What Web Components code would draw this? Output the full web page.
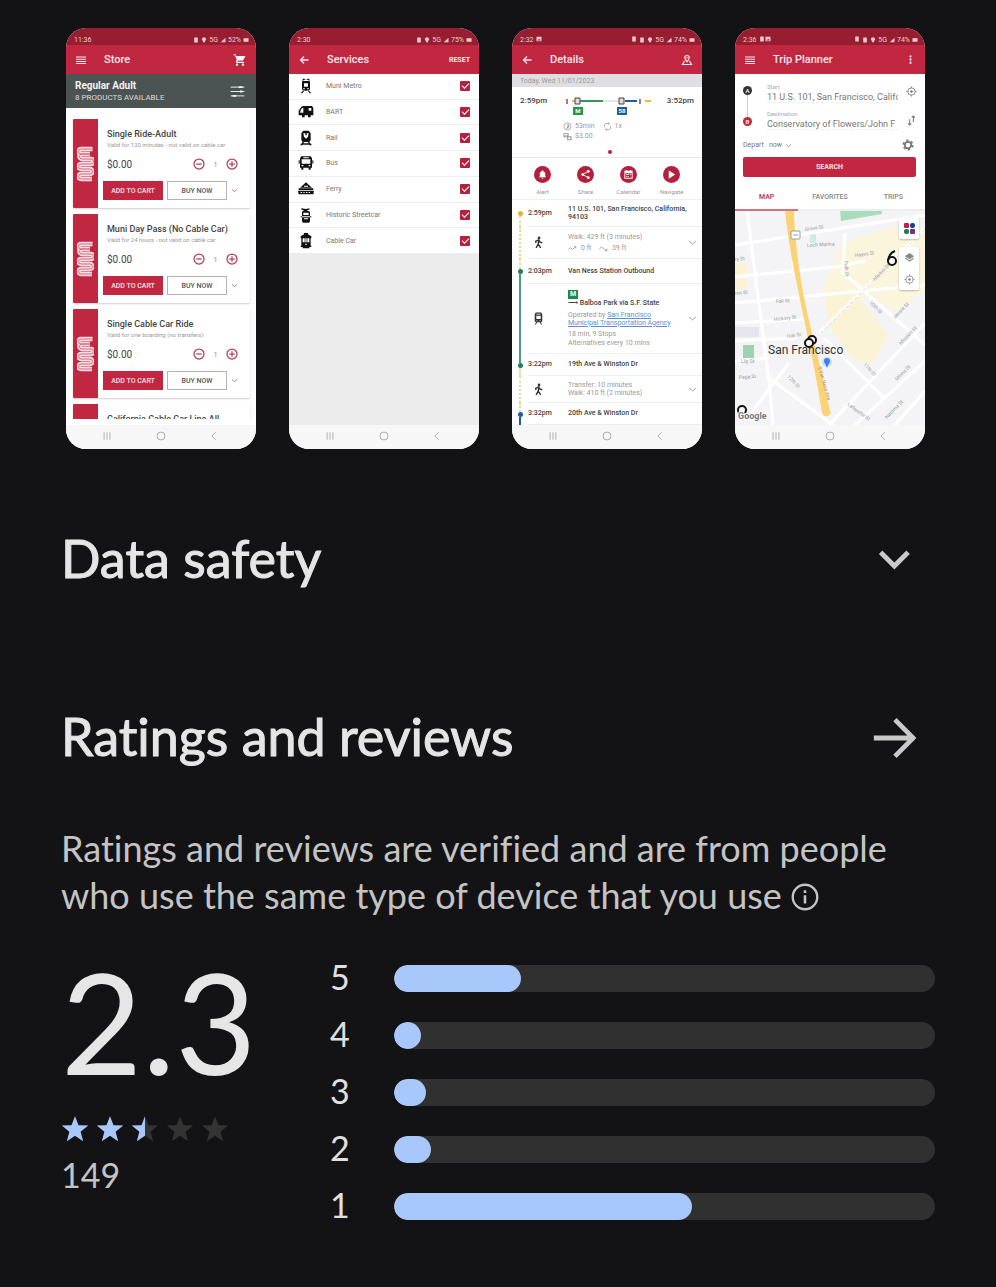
<!DOCTYPE html>
<html lang="en">
<head>
<meta charset="utf-8">
<meta name="viewport" content="width=device-width, initial-scale=1">
<title>App listing</title>
<style>
  body { margin: 0; background: #131315; color: #e3e3e3; font-family: Lato, "Open Sans", sans-serif; font-variant-ligatures: none; }
</style>
</head>
<body>
<app-listing></app-listing>
<script>
const define = (name, html, setup) => {
  const t = document.createElement('template');
  t.innerHTML = html;
  customElements.define(name, class extends HTMLElement {
    connectedCallback() {
      if (this.shadowRoot) return;
      const root = this.attachShadow({ mode: 'open' });
      root.append(t.content.cloneNode(true));
      if (setup) setup(this, root);
    }
  });
};

/* ---------- icons ---------- */
const line = (d, w = 2) => `<path d="${d}" fill="none" stroke="currentColor" stroke-width="${w}"/>`;
const fill = d => `<path d="${d}" fill="currentColor" fill-rule="evenodd"/>`;
const ICONS = {
  chevron: line('M4.700 7.800l7.500 7.500 7.500-7.500', 2.6),
  thin: line('M3 8l9 8 9-8', 2.5),
  arrow: line('M1 12h20.500M12.500 2l10 10-10 10', 2.6),
  back: line('M21 12H5M12 5l-7 7 7 7', 2.6),
  info: '<circle cx="12" cy="12" r="10.500" fill="none" stroke="currentColor" stroke-width="2"/>' + fill('M10.900 10.500h2.200v7h-2.200zM10.900 6.300h2.200v2.300h-2.200z'),
  menu: line('M2 6h20M2 10.500h20M2 15h20M2 19h20', 2.4),
  cart: fill('M7 18a2 2 0 100 4 2 2 0 000-4zM17 18a2 2 0 100 4 2 2 0 000-4zM1 2v2h2l3.600 7.600L5.200 14C4.500 15.400 5.500 17 7 17h12v-2H7.400l1.100-2h7.500c.7 0 1.400-.4 1.700-1L21.500 5H5.200L4.300 2z'),
  tune: line('M1 5h22M1 12h22M1 19h22', 1.5) + line('M14 5h6M16 12h4M4 19h6', 3),
  dots: fill('M10 3h4v4h-4zM10 10h4v4h-4zM10 17h4v4h-4z'),
  place: line('M12 3a4.500 4.500 0 014.500 4.500c0 3-4.500 8-4.500 8s-4.500-5-4.500-8A4.500 4.500 0 0112 3zM7 14l-4 7h18l-4-7', 2.4) + fill('M11 6h2v3h-2z'),
  minus: '<circle cx="12" cy="12" r="10" fill="none" stroke="currentColor" stroke-width="2.500"/>' + line('M6.500 12h11', 2.5),
  plus: '<circle cx="12" cy="12" r="10" fill="none" stroke="currentColor" stroke-width="2.500"/>' + line('M6.500 12h11M12 6.500v11', 2.5),
  star: fill('M12 1l3 7.700 8.300.4-6.500 5.200 2.200 8.100-7-4.600-7 4.600 2.200-8.100L.7 9.100 9 8.700z'),
  locate: '<circle cx="12" cy="12" r="8" fill="none" stroke="currentColor" stroke-width="1.800"/><circle cx="12" cy="12" r="2.800" fill="currentColor"/>' + line('M12 1v4M12 19v4M1 12h4M19 12h4', 1.8),
  swap: line('M8 9v13M4.500 18.500L8 22l3.500-3.500M16 15V2M12.500 5.500L16 2l3.500 3.500', 2.2),
  gear: '<circle cx="12" cy="12" r="6.500" fill="none" stroke="currentColor" stroke-width="3.500"/><circle cx="12" cy="12" r="9.500" fill="none" stroke="currentColor" stroke-width="3" stroke-dasharray="5 4.950"/>',
  walk: '<circle cx="13" cy="3.500" r="2.500" fill="currentColor"/>' + line('M12.500 7l-1 8 4.500 7M11.500 15l-4 7M7 13V9.500L12.500 7l2.500 4.500 4 1', 2.6),
  train: fill('M7 1h10l2 3v13l-2 2H7l-2-2V4zM8 7v6h8V7zM8 3h8v1.500H8zM8 15.500h2V17H8zM14 15.500h2V17h-2zM5 23l3-4h2l-3 4zM19 23l-3-4h-2l3 4z'),
  metro: fill('M7 1h3v1.500h4V1h3v3l1 2v11l-2 2H8l-2-2V6l1-2zM9 8v5h6V8zM8 3h8v1.500H8zM8 15h2v2H8zM14 15h2v2h-2zM4 23l4-4.500h2L6.500 23zM20 23l-4-4.500h-2l3.500 4.500z'),
  bart: fill('M8 3h13l2 3v11h-4v3h-4v-3H10v3H6v-3H1V10l4-6zM6 6l-2.500 4.500V13H8V6zM16 6v4h4V6z'),
  rail: fill('M8 1h8l3 4v10l-2 3H7l-2-3V5zM8 5l1 5 3 3 3-3 1-5h-3v3h-2V5zM3 23l4-5h2l-1 2h8l-1-2h2l4 5h-3l-1-1H7l-1 1z'),
  bus: fill('M5 2h14l2 3v14h-2v3h-3v-3H8v3H5v-3H3V5zM5.500 6.500v6.500h13V6.500zM8 3.500v1.500h8V3.500zM5.500 15v2H8v-2zM16 15v2h2.500v-2zM1 8h1.500v5H1zM21.500 8H23v5h-1.500z'),
  ferry: fill('M12 2l9 8H3zM1 11h22v3H1zM0 15h24l-1 5H1zM4 16.500v1.500h2v-1.500zM8 16.500v1.500h2v-1.500zM12 16.500v1.500h2v-1.500zM16 16.500v1.500h2v-1.500zM9 7v1.500h6V7z'),
  tram: fill('M5 2l7 1 5-1v2l-4 1 5 2v15H6V7l3-2-4-1zM8 8.500V12h8V8.500zM4 14h16v1.500H4zM9 17v1.500h6V17zM7 22h10v1.500H7z'),
  cable: fill('M9 0h6v2l5 3v3h-1v11h1v2h-3v2H7v-2H4v-2h1V8H4V5l5-3zM7 8v6h3V8zM11 8v6h2V8zM14 8v6h3V8zM11 16v2h2v-2z'),
  bell: fill('M12 21a2 2 0 002-2h-4a2 2 0 002 2zM18 16v-5c0-3-1.600-5.500-4.500-6.200V4a1.500 1.500 0 00-3 0v.800C7.600 5.500 6 8 6 11v5l-2 2h16z'),
  share: line('M18 5L6 12l12 7', 2) + '<circle cx="18" cy="5" r="3" fill="currentColor"/><circle cx="6" cy="12" r="3" fill="currentColor"/><circle cx="18" cy="19" r="3" fill="currentColor"/>',
  calendar: fill('M3 4h3V2h3v2h6V2h3v2h3v17H3zM5 9v10h14V9zM7 11h3v2H7zM11 11h2v2h-2zM15 11h2v2h-2zM7 15h3v2H7zM11 15h2v2h-2z'),
  play: fill('M6 3l14 9-14 9z'),
  clock: '<circle cx="12" cy="12" r="9.500" fill="none" stroke="currentColor" stroke-width="2"/>' + fill('M12 5v7l-4 5h6l3-9z'),
  loop: line('M4 14V9a5 5 0 015-5h8M14 1l3 3-3 3M20 10v5a5 5 0 01-5 5H7M10 23l-3-3 3-3', 2),
  fare: fill('M1 3h14v8h8v11H11v-8H1zM3 5v2h10V5zM3 9v2h8V9zM14 14v5h6v-5z'),
  up: line('M1 15l6-5 5 4 9-7M21 12V7h-5', 2.2),
  down: line('M1 13l6-5 5 5 9 5M21 12v6h-5', 2.2),
  layers: fill('M12 2l10 7-10 7L2 9zM2 14l10 7 10-7-2-1.500-8 5.500-8-5.500z'),
  recents: line('M5 3v18M12 3v18M19 3v18', 1.8),
  home: '<rect x="3" y="3" width="18" height="18" rx="7" fill="none" stroke="currentColor" stroke-width="1.900"/>',
  prev: line('M16 3l-9 9 9 9', 1.9),
  photo: fill('M2 3h20v18H2zM5 18h14l-5-7-3 4-2-2z'),
  signal: fill('M22 3v18H3z'),
  battery: fill('M2 5h20v14H2z'),
  blob: fill('M5 2h14v20H5z'),
  pin: fill('M12 1a8 8 0 018 8c0 5-8 14-8 14S4 14 4 9a8 8 0 018-8z')
};
customElements.define('ui-icon', class extends HTMLElement {
  connectedCallback() {
    if (this.shadowRoot) return;
    this.attachShadow({ mode: 'open' }).innerHTML = `
      <style>
        :host { display: inline-block; flex: none; width: 12px; height: 12px; }
        svg { display: block; width: 100%; height: 100%; }
      </style>
      <svg viewBox="0 0 24 24" aria-hidden="true">${ICONS[this.getAttribute('name')]}</svg>`;
  }
});

const RESET = `
  * { box-sizing: border-box; }
  button { font: inherit; color: inherit; background: none; border: 0; padding: 0; margin: 0; cursor: pointer; display: inline-flex; align-items: center; justify-content: center; }
  p, h2, h3, ul { margin: 0; padding: 0; }
`;

/* ---------- phone frame ---------- */
define('phone-shot', `
<style>${RESET}
  :host { display: flex; flex-direction: column; min-width: 0; min-height: 421px; border-radius: 20px; overflow: hidden; background: var(--body, #fff); color: #444; font-family: Roboto, sans-serif; font-size: 7px; }
  .status { display: flex; align-items: center; gap: 2px; height: 17px; padding: 6px 7px 0 8px; background: #971d30; color: #f4cbd1; line-height: 8px; }
  .status .sp { flex: 1; }
  .status ui-icon { width: 6px; height: 6px; }
  .bar { display: flex; align-items: center; height: 29px; padding: 0 9px; background: #c22742; color: #fbe9ec; }
  .lead { width: 29px; display: flex; }
  .lead ui-icon { width: 12px; height: 12px; }
  h3 { flex: 1; font-size: 11px; line-height: 14px; font-weight: 500; }
  main { flex: 1; display: flex; flex-direction: column; min-height: 0; }
  nav { display: flex; justify-content: space-between; align-items: center; height: 24px; padding: 0 37px 2px 36px; background: #f7f7f8; color: #999; }
  nav ui-icon { width: 10px; height: 10px; }
</style>
<div class="status"><span class="time"></span><span class="left"></span><span class="sp"></span><span class="right"></span><ui-icon name="blob"></ui-icon><ui-icon name="pin"></ui-icon><span>5G</span><ui-icon name="signal"></ui-icon><span class="charge"></span><ui-icon name="battery"></ui-icon></div>
<div class="bar"><button class="lead"></button><h3></h3><slot name="action"></slot></div>
<main><slot></slot></main>
<nav><button aria-label="Recents"><ui-icon name="recents"></ui-icon></button><button aria-label="Home"><ui-icon name="home"></ui-icon></button><button aria-label="Back"><ui-icon name="prev"></ui-icon></button></nav>
`, (el, r) => {
  const icons = list => (list || '').split(' ').filter(Boolean).map(n => `<ui-icon name="${n}"></ui-icon>`).join('');
  r.querySelector('.time').textContent = el.getAttribute('time');
  r.querySelector('.charge').textContent = el.getAttribute('charge');
  r.querySelector('.left').innerHTML = icons(el.getAttribute('notices'));
  r.querySelector('.right').innerHTML = icons(el.getAttribute('extras'));
  r.querySelector('h3').textContent = el.getAttribute('heading');
  const lead = r.querySelector('.lead');
  lead.innerHTML = icons(el.getAttribute('lead'));
  lead.setAttribute('aria-label', el.getAttribute('lead'));
  lead.style.justifyContent = 'flex-start';
});

/* ---------- store ---------- */
define('product-card', `
<style>${RESET}
  :host { display: grid; grid-template-columns: 25px 1fr; flex: none; height: 89px; background: #fff; box-shadow: 0 1px 2px rgba(0,0,0,.2); border-radius: 1px; color: #444; }
  :host([peek]) .price, :host([peek]) .buy, :host([peek]) svg, :host([peek]) p { display: none; }
  .brand { background: #c22742; display: flex; align-items: center; justify-content: center; border-radius: 1px 0 0 1px; }
  .brand svg { width: 17px; height: 36px; }
  .info { padding: 9px 0 0 5px; min-width: 0; white-space: nowrap; }
  h3 { padding-left: 4px; font-size: 9px; line-height: 12px; font-weight: 500; color: #444; }
  p { padding-left: 4px; font-size: 6px; line-height: 10px; color: #999; }
  .price { display: flex; align-items: center; height: 28px; padding: 0 12px 0 4px; font-size: 10px; }
  .price span { flex: 1; }
  .price b { font-weight: 400; font-size: 8px; width: 21px; text-align: center; color: #999; }
  .price button { color: #b5405a; }
  .price ui-icon { width: 12px; height: 12px; }
  .buy { display: flex; align-items: center; gap: 4px; padding-top: 3px; }
  .buy button { height: 19px; width: 60px; font-size: 7px; font-weight: 500; }
  .buy .add { background: #c22742; color: #fbe3e6; }
  .buy .now { border: 1px solid #b8b0b3; color: #555; }
  .buy .more { width: 6px; color: #b5405a; }
  .more ui-icon { width: 7px; height: 7px; }
</style>
<div class="brand"><svg viewBox="0 0 17 36" fill="none" stroke-linejoin="round"><path d="M15.500 3H4a2 2 0 000 5h9M13 8H5a2 2 0 000 5h9a2 2 0 010 5H4a2 2 0 000 5h9a2 2 0 010 5H4a2 2 0 000 5h11" stroke="#f9dfe3" stroke-width="4.500"/><path d="M15.500 3H4a2 2 0 000 5h9M13 8H5a2 2 0 000 5h9a2 2 0 010 5H4a2 2 0 000 5h9a2 2 0 010 5H4a2 2 0 000 5h11" stroke="#d4667a" stroke-width="1"/></svg></div>
<div class="info">
  <h3></h3><p></p>
  <div class="price"><span>$0.00</span><button aria-label="Fewer"><ui-icon name="minus"></ui-icon></button><b>1</b><button aria-label="More"><ui-icon name="plus"></ui-icon></button></div>
  <div class="buy"><button class="add">ADD TO CART</button><button class="now">BUY NOW</button><button class="more" aria-label="Options"><ui-icon name="thin"></ui-icon></button></div>
</div>
`, (el, r) => {
  r.querySelector('h3').textContent = el.getAttribute('heading');
  r.querySelector('p').textContent = el.getAttribute('note');
  if (el.hasAttribute('peek')) r.querySelectorAll('.price, .buy, p').forEach(n => n.remove());
});

define('store-screen', `
<style>${RESET}
  :host { display: contents; }
  .head { display: flex; align-items: center; justify-content: space-between; height: 34px; padding: 0 11px 0 9px; background: #4b5353; color: #f2f2f2; }
  .head b { display: block; font-size: 10px; line-height: 13px; font-weight: 700; }
  .head span { display: block; font-size: 8px; line-height: 11px; color: #dadddd; white-space: nowrap; }
  .head ui-icon { width: 15px; height: 15px; }
  .list { display: flex; flex-direction: column; gap: 6px; height: 311px; padding: 11px 6px 0 7px; overflow: hidden; }
  .cart { color: #fff; }
  .cart ui-icon { width: 14px; height: 14px; }
  .foot { height: 6px; }
</style>
<phone-shot time="11:36" charge="52%" lead="menu" heading="Store">
  <button class="cart" slot="action" aria-label="Cart"><ui-icon name="cart"></ui-icon></button>
  <div class="head"><div><b>Regular Adult</b><span>8 PRODUCTS AVAILABLE</span></div><button aria-label="Filter"><ui-icon name="tune"></ui-icon></button></div>
  <div class="list">
    <product-card heading="Single Ride-Adult" note="Valid for 120 minutes - not valid on cable car"></product-card>
    <product-card heading="Muni Day Pass (No Cable Car)" note="Valid for 24 hours - not valid on cable car"></product-card>
    <product-card heading="Single Cable Car Ride" note="Valid for one boarding (no transfers)"></product-card>
    <product-card peek heading="California Cable Car Line All"></product-card>
  </div>
  <div class="foot"></div>
</phone-shot>`);

/* ---------- services ---------- */
define('service-row', `
<style>${RESET}
  :host { display: block; background: #fff; border-bottom: 1px solid #eee; }
  label { display: grid; grid-template-columns: 28px 1fr 10px; align-items: center; height: 100%; padding: 0 9px; font-size: 7px; color: #777; }
  ui-icon { width: 16px; height: 16px; color: #111; }
  input { appearance: none; width: 10px; height: 10px; margin: 0; background: #b5213c; border-radius: 1px; display: grid; place-items: center; }
  input:checked::before { content: ""; width: 6px; height: 3px; margin-bottom: 2px; border: solid #fff; border-width: 0 0 1px 1px; transform: rotate(-45deg); }
</style>
<label><ui-icon></ui-icon><span></span><input type="checkbox" checked></label>
`, (el, r) => {
  const i = document.createElement('ui-icon');
  i.setAttribute('name', el.getAttribute('icon'));
  r.querySelector('ui-icon').replaceWith(i);
  r.querySelector('span').textContent = el.getAttribute('label');
});

define('services-screen', `
<style>${RESET}
  :host { display: contents; }
  phone-shot { --body: #ececec; }
  .rows { display: grid; grid-template-rows: repeat(7, 1fr); height: 180px; }
  .reset { font-size: 7px; font-weight: 700; color: #fbe3e6; }
</style>
<phone-shot time="2:30" charge="75%" lead="back" heading="Services">
  <button class="reset" slot="action">RESET</button>
  <div class="rows">
  <service-row icon="metro" label="Muni Metro"></service-row>
  <service-row icon="bart" label="BART"></service-row>
  <service-row icon="rail" label="Rail"></service-row>
  <service-row icon="bus" label="Bus"></service-row>
  <service-row icon="ferry" label="Ferry"></service-row>
  <service-row icon="tram" label="Historic Streetcar"></service-row>
  <service-row icon="cable" label="Cable Car"></service-row>
  </div>
</phone-shot>`);

/* ---------- trip details ---------- */
define('trip-leg', `
<style>${RESET}
  :host { display: grid; grid-template-columns: 16px 40px 1fr 20px; flex: none; white-space: nowrap; font-size: 7px; color: #999; line-height: 9px; }
  .rail { display: grid; grid-template-rows: 1fr 5px 1fr; justify-items: center; }
  :host(:not([stop])) .rail { grid-template-rows: 1fr; }
  :host(:not([stop])) .dot, :host(:not([stop])) .before { display: none; }
  .before { border-left: 2px var(--bs, dotted) var(--before, transparent); }
  .after { border-left: 2px var(--as, dotted) var(--after, transparent); }
  .dot { width: 5px; height: 5px; border-radius: 50%; background: var(--dot); }
  .time, .body { border-bottom: 1px solid #eee; display: flex; align-items: center; }
  .body { flex-direction: column; align-items: flex-start; justify-content: center; }
  .time ui-icon { width: 13px; height: 13px; margin-left: 4px; color: #333; }
  :host([stop]) { color: #444; font-weight: 500; }
  .end { display: flex; align-items: center; justify-content: center; border-bottom: 1px solid #eee; color: #999; }
  .end ui-icon { width: 9px; height: 9px; }
</style>
<div class="rail"><i class="before"></i><i class="dot"></i><i class="after"></i></div>
<div class="time"></div>
<div class="body"><slot></slot></div>
<div class="end"></div>
`, (el, r) => {
  const t = el.getAttribute('time');
  r.querySelector('.time').innerHTML = t ? t : `<ui-icon name="${el.getAttribute('icon')}"></ui-icon>`;
  if (!el.hasAttribute('stop')) r.querySelector('.end').innerHTML = '<button aria-label="Expand"><ui-icon name="thin"></ui-icon></button>';
});

define('details-screen', `
<style>${RESET}
  :host { display: contents; }
  phone-shot { --body: #fff; }
  .date { height: 13px; padding: 0 8px; background: #dfdfe3; color: #999; font-size: 7px; line-height: 14px; }
  .sum { height: 71px; padding: 9px 8px 0; border-bottom: 1px solid #e8e8e8; }
  .trip { display: grid; grid-template-columns: 45px 1fr auto; align-items: start; font-size: 8px; line-height: 10px; font-weight: 500; }
  .route svg { display: block; width: 88px; height: 20px; }
  .meta { display: flex; align-items: center; gap: 3px; padding-left: 43px; height: 10px; font-size: 7px; color: #999; }
  .meta ui-icon { width: 9px; height: 9px; }
  .meta ui-icon:nth-of-type(2) { margin-left: 5px; }
  .metas { padding-top: 5px; }
  .pager { display: flex; justify-content: center; padding: 9px 0 0 5px; }
  .pager i { width: 4px; height: 4px; border-radius: 50%; background: #b5213c; }
  .acts { display: flex; justify-content: space-between; height: 42px; padding: 8px 9px 0; border-bottom: 1px solid #eee; }
  .acts button { flex-direction: column; justify-content: flex-start; width: 43px; gap: 4px; font-size: 6px; line-height: 10px; color: #999; }
  .acts span { display: flex; align-items: center; justify-content: center; width: 17px; height: 17px; border-radius: 50%; background: #b5213c; color: #fff; }
  .acts ui-icon { width: 11px; height: 11px; }
  .m { display: inline-block; padding: 0 2px; background: #1d8a47; color: #fff; font-weight: 700; font-size: 7px; line-height: 9px; }
  .row { display: flex; align-items: center; gap: 4px; padding-top: 2px; }
  .row ui-icon { width: 9px; height: 9px; }
  .two { line-height: 8px; }
  .gap { padding-top: 3px; }
  .dark { color: #444; font-weight: 500; }
  a { color: #5a8fd0; }
  .s1 { height: 27px; } .l1 { height: 32px; } .s2 { height: 25px; } .l2 { height: 70px; }
  .s3 { height: 22px; } .l3 { height: 27px; } .s4 { height: 22px; }
  .top { color: #fbe9ec; }
</style>
<phone-shot time="2:32" notices="photo" extras="blob" charge="74%" lead="back" heading="Details">
  <button class="top" slot="action" aria-label="Map"><ui-icon name="place"></ui-icon></button>
  <div class="date">Today, Wed 11/01/2023</div>
  <div class="sum">
    <div class="trip"><span>2:59pm</span>
      <div class="route"><svg viewBox="0 0 88 20"><path d="M2 3v5M75 3v5" stroke="#888" stroke-width="2"/><path d="M7 5h4M80 5h6" stroke="#e4bd3c" stroke-width="2"/><path d="M14 5h24" stroke="#2f9a58" stroke-width="2"/><path d="M38 5h16" stroke="#ccc"/><path d="M60 5h12" stroke="#1e5fa8" stroke-width="2"/><path d="M10 2h5v6h-5zM54 2h5v6h-5z" fill="#ddd" stroke="#444"/><path d="M8 11h10v8H8z" fill="#1d9a4b"/><path d="M52 11h10v8H52z" fill="#1c5c9c"/><text x="13" y="17" font-size="6" font-weight="700" fill="#fff" text-anchor="middle">M</text><text x="57" y="17" font-size="6" font-weight="700" fill="#fff" text-anchor="middle">58</text></svg></div>
      <span>3:52pm</span></div>
    <div class="metas">
      <div class="meta"><ui-icon name="clock"></ui-icon>53min<ui-icon name="loop"></ui-icon>1x</div>
      <div class="meta"><ui-icon name="fare"></ui-icon>$3.00</div>
    </div>
    <div class="pager"><i></i></div>
  </div>
  <div class="acts">
    <button><span><ui-icon name="bell"></ui-icon></span>Alert</button>
    <button><span><ui-icon name="share"></ui-icon></span>Share</button>
    <button><span><ui-icon name="calendar"></ui-icon></span>Calendar</button>
    <button><span><ui-icon name="play"></ui-icon></span>Navigate</button>
  </div>
  <trip-leg stop time="2:59pm" class="s1" style="--dot:#e0b52c;--after:#ead68e"><div class="two">11 U.S. 101, San Francisco, California,<br>94103</div></trip-leg>
  <trip-leg icon="walk" class="l1" style="--after:#ead68e"><div>Walk: 429 ft (3 minutes)</div><div class="row"><ui-icon name="up"></ui-icon>0 ft &nbsp;<ui-icon name="down"></ui-icon>39 ft</div></trip-leg>
  <trip-leg stop time="2:03pm" class="s2" style="--dot:#1f7f5c;--before:#ead68e;--after:#4a9c80;--as:solid">Van Ness Station Outbound</trip-leg>
  <trip-leg icon="train" class="l2" style="--after:#4a9c80;--as:solid"><span class="m">M</span><div class="dark">⟶ Balboa Park via S.F. State</div><div class="two gap">Operated by <a href="#">San Francisco</a><br><a href="#">Municipal Transportation Agency</a></div><div class="gap">18 min, 9 Stops</div><div>Alternatives every 10 mins</div></trip-leg>
  <trip-leg stop time="3:22pm" class="s3" style="--dot:#1f7f5c;--before:#4a9c80;--bs:solid;--after:#d8e09a">19th Ave &amp; Winston Dr</trip-leg>
  <trip-leg icon="walk" class="l3" style="--after:#d8e09a"><div class="two">Transfer: 10 minutes<br>Walk: 410 ft (2 minutes)</div></trip-leg>
  <trip-leg stop time="3:32pm" class="s4" style="--dot:#1c5c9c;--before:#d8e09a;--after:#1c5c9c;--as:solid">20th Ave &amp; Winston Dr</trip-leg>
</phone-shot>`);

/* ---------- planner ---------- */
define('city-map', `
<style>
  :host { display: block; position: relative; flex: 1; overflow: hidden; min-height: 214px; }
  svg.map { display: block; width: 100%; height: 214px; font-family: Roboto, sans-serif; }
  .tools { position: absolute; right: 6px; top: 6px; display: grid; gap: 8px; }
  .box { width: 20px; background: #fff; border-radius: 2px; box-shadow: 0 1px 2px rgba(0,0,0,.25); display: grid; justify-items: center; align-content: space-around; color: #888; }
  .one { height: 22px; } .two { height: 43px; }
  button { border: 0; padding: 0; background: none; display: flex; color: inherit; }
  .box svg { width: 11px; height: 11px; }
  ui-icon { width: 11px; height: 11px; }
</style>
<svg class="map" viewBox="0 0 190 214" preserveAspectRatio="xMidYMid slice">
  <rect width="190" height="214" fill="#f4f4f7"/>
  <path d="M106 32l50-16 34 2v62l-30 20-24-14-28 8-18 4-2-22z" fill="#fbf5de"/>
  <path d="M92 84l28-2 34 42-18 30-20-8-24-34z" fill="#fbf3d6"/>
  <path d="M0 52h12v26H0z" fill="#fbf3d6"/>
  <path d="M105 0h42v3l-41 7z" fill="#a9dcbc"/>
  <path d="M8 134h11v13H8z" fill="#9ed3b0"/><path d="M0 116h24v10H0z" fill="#e4e6ec"/>
  <path d="M75 22h6v10h-6z" fill="#cdeee4"/>
  <g stroke="#fff" fill="none"><path d="M12 0l22 170 4 44M0 34l190-30M0 66l100-10 30-6M0 92l190-18M0 112l70-4M0 130l62-3M0 150l34-3M58 64l2-64" stroke-width="3"/><path d="M94 214L190 112M84 122L190 18M36 168l62 46M90 128l60 60M106 60l84 74M120 214l70-64M10 210l44-58M160 214l30-34M110 22l-2 40" stroke-width="3"/></g>
  <path d="M190 18L86 122" stroke="#dcd8e0" stroke-dasharray="4 2" fill="none"/>
  <path d="M50 0h9c2 50 10 90 20 130s12 55 17 72q-5 7-9 0C76 130 56 60 50 0z" fill="#fbd377"/>
  <g font-size="5" fill="#999">
    <text x="70" y="20" transform="rotate(-8 70 20)">Grove St</text><text x="72" y="36" transform="rotate(-3 72 36)">Loch Marina</text>
    <text x="0" y="50" transform="rotate(-6 0 50)">ry St</text><text x="0" y="84" transform="rotate(-6 0 84)">ren St</text>
    <text x="120" y="46" transform="rotate(-8 120 46)">Hayes St</text><text x="109" y="50" transform="rotate(85 109 50)">Polk St</text>
    <text x="140" y="70" transform="rotate(-46 140 70)">Market St</text><text x="41" y="92" transform="rotate(-4 41 92)">Fell St</text>
    <text x="39" y="110" transform="rotate(-6 39 110)">Hickory St</text><text x="52" y="127" transform="rotate(-8 52 127)">Oak St</text>
    <text x="134" y="92" transform="rotate(45 134 92)">10th St</text><text x="160" y="108" transform="rotate(-46 160 108)">Jessie St</text>
    <text x="166" y="134" transform="rotate(-46 166 134)">Mission St</text><text x="128" y="154" transform="rotate(46 128 154)">11th St</text>
    <text x="162" y="170" transform="rotate(-46 162 170)">Minna St</text><text x="52" y="166" transform="rotate(46 52 166)">12th St</text>
    <text x="112" y="194" transform="rotate(36 112 194)">Lafayette St</text><text x="152" y="208" transform="rotate(-46 152 208)">Natoma St</text>
    <text x="4" y="168" transform="rotate(-4 4 168)">Page St</text><text x="6" y="152">Lily St</text>
    <text x="83" y="156" transform="rotate(74 83 156)" fill="#a98a4b">S Van Ness Ave</text>
  </g>
  <rect x="56" y="20" width="9" height="8" rx="1" fill="#fff" stroke="#999"/><path d="M58 24h5" stroke="#999"/>
  <circle cx="92" cy="151" r="5" fill="#c7dcf8"/><circle cx="92" cy="150" r="3" fill="#3b82e8"/><path d="M90 152h4l-2 5z" fill="#3b82e8"/>
  <text x="33" y="143" font-size="12" fill="#333">San Francisco</text>
  <g fill="#fff" stroke="#111" stroke-width="2"><circle cx="77" cy="129" r="4"/><circle cx="74" cy="132" r="4"/><circle cx="157" cy="50" r="4"/><circle cx="7" cy="199" r="4"/></g>
  <path d="M160 40q-6 2-7 10" fill="none" stroke="#111" stroke-width="2"/>
  <text x="3" y="208" font-size="9" font-weight="700" fill="#777" stroke="#fff" stroke-width="2" paint-order="stroke">Google</text>
</svg>
<div class="tools">
  <div class="box one"><button aria-label="Filters"><svg viewBox="0 0 11 11"><rect width="5" height="5" rx="1" fill="#c02050"/><rect x="6" width="5" height="5" rx="2" fill="#1c3f94"/><rect y="6" width="5" height="5" rx="2" fill="#13804a"/><rect x="6" y="6" width="5" height="5" rx="1" fill="#7a2d8c"/></svg></button></div>
  <div class="box two"><button aria-label="Layers"><ui-icon name="layers"></ui-icon></button><button aria-label="Locate"><ui-icon name="locate"></ui-icon></button></div>
</div>`);

define('planner-screen', `
<style>${RESET}
  :host { display: contents; }
  .form { display: grid; grid-template-columns: 24px 1fr 26px; padding: 8px 1px 0 8px; }
  .ends { display: flex; flex-direction: column; align-items: flex-start; padding-top: 4px; }
  .ends b { width: 9px; height: 9px; border-radius: 50%; background: #333; color: #fff; font-size: 6px; line-height: 9px; text-align: center; font-weight: 500; }
  .ends b + i + b { background: #c22742; }
  .ends i { height: 22px; margin-left: 4px; border-left: 1px solid #ccc; }
  .icons { display: flex; flex-direction: column; align-items: center; justify-content: space-between; height: 44px; padding-top: 4px; color: #777; }
  .icons ui-icon { width: 11px; height: 11px; }
  label { display: block; height: 27px; font-size: 6px; line-height: 9px; color: #aaa; }
  input { display: block; width: 100%; height: 12px; padding: 0; border: 0; border-bottom: 1px dashed #eee; outline: 0; font: 9px/11px Roboto, sans-serif; color: #777; background: none; }
  .depart { display: flex; align-items: center; height: 18px; padding: 0 11px 0 8px; gap: 5px; font-size: 7px; color: #777; }
  .depart .when { gap: 3px; }
  .when ui-icon { width: 7px; height: 7px; }
  .depart .gear { margin-left: auto; }
  .gear ui-icon { width: 12px; height: 12px; }
  .search { height: 20px; margin: 3px 9px 0 8px; background: #c22742; color: #fbe3e6; border-radius: 2px; font-size: 7px; font-weight: 700; }
  .tabs { display: grid; grid-template-columns: 1fr 1fr 1fr; height: 34px; padding-top: 8px; }
  .tabs button { font-size: 7px; color: #888; border-bottom: 2px solid #eee; font-weight: 500; }
  .tabs button:first-child { color: #c22742; border-color: #d8707f; }
  .more { color: #fff; } .more ui-icon { width: 11px; height: 11px; }
  city-map { min-height: 213px; height: 213px; }
</style>
<phone-shot time="2:36" notices="blob photo" extras="blob" charge="74%" lead="menu" heading="Trip Planner">
  <button class="more" slot="action" aria-label="More"><ui-icon name="dots"></ui-icon></button>
  <div class="form">
    <div class="ends"><b>A</b><i></i><b>B</b></div>
    <div><label>Start<input value="11 U.S. 101, San Francisco, California"></label><label>Destination<input value="Conservatory of Flowers/John F Kennedy"></label></div>
    <div class="icons"><button aria-label="Use my location"><ui-icon name="locate"></ui-icon></button><button aria-label="Swap"><ui-icon name="swap"></ui-icon></button></div>
  </div>
  <div class="depart"><span>Depart</span><button class="when">now <ui-icon name="thin"></ui-icon></button><button class="gear" aria-label="Settings"><ui-icon name="gear"></ui-icon></button></div>
  <button class="search">SEARCH</button>
  <div class="tabs"><button>MAP</button><button>FAVORITES</button><button>TRIPS</button></div>
  <city-map></city-map>
</phone-shot>`);

/* ---------- listing ---------- */
define('section-head', `
<style>${RESET}
  :host { display: flex; align-items: center; justify-content: space-between; height: 60px; padding-right: 19px; }
  h2 { font-size: 52px; line-height: 60px; font-weight: 400; color: #e5e5e5; padding-bottom: 4px; -webkit-text-stroke: 1px currentColor; }
  button { color: #c9c9c9; }
  ui-icon { width: 44px; height: 44px; }
</style>
<h2><slot></slot></h2><button aria-label="Open"></button>
`, (el, r) => { r.querySelector('button').innerHTML = `<ui-icon name="${el.getAttribute('icon')}"></ui-icon>`; });

define('star-row', `
<style>
  :host { display: flex; gap: 5px; }
  span { display: grid; width: 30px; height: 30px; color: #333; }
  ui-icon { grid-area: 1 / 1; width: 28px; height: 30px; }
  .on { color: #a8c7fa; }
</style>`, (el, r) => {
  const v = Number(el.getAttribute('value'));
  el.setAttribute('role', 'img');
  el.setAttribute('aria-label', v + ' stars');
  for (let i = 0; i < 5; i++) {
    const part = Math.max(0, Math.min(1, v - i)) * 100;
    const s = document.createElement('span');
    s.innerHTML = '<ui-icon name="star"></ui-icon>' + (part ? `<ui-icon class="on" name="star" style="clip-path: inset(0 ${100 - part}% 0 0)"></ui-icon>` : '');
    r.append(s);
  }
});

define('rating-bar', `
<style>
  :host { display: grid; grid-template-columns: 64px 1fr; align-items: center; height: 57px; font-size: 34px; line-height: 42px; color: #e0e0e0; }
  span { padding-bottom: 4px; }
  .track { height: 27px; border-radius: 14px; background: #303031; overflow: hidden; }
  .fill { height: 100%; min-width: 27px; border-radius: 14px; background: #a8c7fa; }
</style>
<span></span><div class="track" role="img"><div class="fill"></div></div>
`, (el, r) => {
  r.querySelector('span').textContent = el.getAttribute('label');
  r.querySelector('.track').setAttribute('aria-label', el.getAttribute('share') + '%');
  r.querySelector('.fill').style.width = el.getAttribute('share') + '%';
});

define('app-listing', `
<style>${RESET}
  :host { display: block; padding: 28px 61px 52px; }
  .shots { display: grid; grid-template-columns: repeat(4, 1fr); gap: 33px; padding: 0 10px 0 5px; }
  .one { margin-top: 81px; }
  .two { margin-top: 118px; }
  .note { margin-top: 57px; font-size: 36px; line-height: 47px; color: #c4c4c4; }
  .note button { vertical-align: -2px; }
  .note ui-icon { width: 28px; height: 28px; }
  .rating { display: grid; grid-template-columns: 269px 1fr; margin-top: 31px; }
  .score { font-size: 140px; line-height: 142px; color: #e6e6e6; }
  .count { font-size: 34px; line-height: 42px; color: #c4c4c4; margin-top: 10px; }
  star-row { margin-top: 22px; }
</style>
<div class="shots"><store-screen></store-screen><services-screen></services-screen><details-screen></details-screen><planner-screen></planner-screen></div>
<section-head class="one" icon="chevron">Data safety</section-head>
<section-head class="two" icon="arrow">Ratings and reviews</section-head>
<p class="note">Ratings and reviews are verified and are from people who use the same type of device that you use <button aria-label="About ratings"><ui-icon name="info"></ui-icon></button></p>
<div class="rating">
  <div><div class="score">2.3</div><star-row value="2.5"></star-row><div class="count">149</div></div>
  <div>
    <rating-bar label="5" share="23.5"></rating-bar>
    <rating-bar label="4" share="4"></rating-bar>
    <rating-bar label="3" share="6"></rating-bar>
    <rating-bar label="2" share="6.8"></rating-bar>
    <rating-bar label="1" share="55"></rating-bar>
  </div>
</div>`);
</script>
</body>
</html>
